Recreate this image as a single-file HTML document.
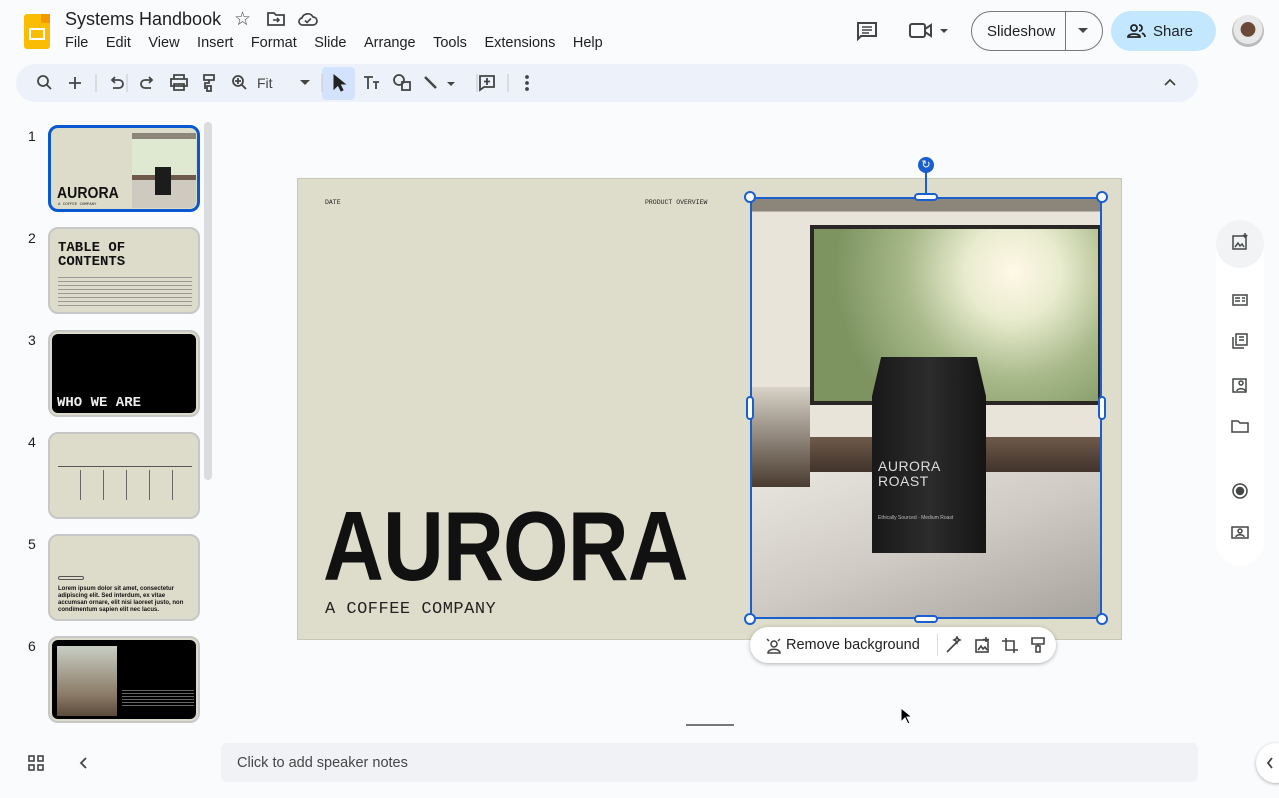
<!DOCTYPE html>
<html><head><meta charset="utf-8"><style>
*{box-sizing:border-box;margin:0;padding:0}
body{width:1279px;height:798px;overflow:hidden;background:#f9fbfd;font-family:"Liberation Sans",Arial,sans-serif;position:relative;color:#1f1f1f}
.a{position:absolute}
.menu span{margin-right:17.5px}
.thumb{position:absolute;left:48px;width:152px;height:87px;border:2px solid #c7c7c7;border-radius:10px;overflow:hidden;background:#dddcca;padding:2px}
.thumb .in{width:100%;height:100%;border-radius:6px;overflow:hidden;position:relative;background:#dddcca}
.num{position:absolute;left:28px;font-size:14px;color:#1f1f1f}
.mono{font-family:"Liberation Mono","DejaVu Sans Mono",monospace}
</style></head><body>
<div class="a" style="left:24px;top:14px;width:26px;height:35px;background:#fbbc04;border-radius:3px"></div>
<div class="a" style="left:41px;top:14px;width:9px;height:9px;background:#f29900;border-bottom-left-radius:2px"></div>
<div class="a" style="left:29px;top:28px;width:16px;height:12px;border:2px solid #fff"></div>
<div class="a" style="left:65px;top:9px;font-size:18px">Systems Handbook</div>
<div class="a" style="left:234px;top:8px;font-size:19px;color:#444">☆</div>
<svg class="a" style="left:266px;top:11px" width="20" height="16" viewBox="0 0 20 16"><path d="M2 2h6l2 2h8v10H2z" fill="none" stroke="#444" stroke-width="1.8"/><path d="M7 9h6M11 7l2 2-2 2" fill="none" stroke="#444" stroke-width="1.6"/></svg>
<svg class="a" style="left:298px;top:11px" width="20" height="16" viewBox="0 0 20 16"><path d="M5 14h10a4 4 0 0 0 0-8 6 6 0 0 0-11 1A3.5 3.5 0 0 0 5 14z" fill="none" stroke="#444" stroke-width="1.7"/><path d="M7 9.5l2 2 4-4" fill="none" stroke="#444" stroke-width="1.6"/></svg>
<div class="a menu" style="left:65px;top:35px;font-size:14.5px;white-space:nowrap"><span>File</span><span>Edit</span><span>View</span><span>Insert</span><span>Format</span><span>Slide</span><span>Arrange</span><span>Tools</span><span>Extensions</span><span>Help</span></div>
<svg class="a" style="left:856px;top:21px" width="22" height="20" viewBox="0 0 22 20"><path d="M2 2h18v13H5l-3 3z" fill="none" stroke="#444" stroke-width="2"/><path d="M6 6h10M6 9h10M6 12h7" stroke="#444" stroke-width="1.6"/></svg>
<svg class="a" style="left:909px;top:22px" width="40" height="18" viewBox="0 0 40 18"><rect x="1" y="2" width="15" height="13" rx="2" fill="none" stroke="#444" stroke-width="2"/><path d="M16 7l6-4v11l-6-4z" fill="none" stroke="#444" stroke-width="2"/><path d="M31 7h8l-4 4z" fill="#444"/></svg>
<div class="a" style="left:971px;top:11px;width:132px;height:40px;border:1px solid #747775;border-radius:20px"></div>
<div class="a" style="left:1065px;top:11px;width:1px;height:40px;background:#747775"></div>
<div class="a" style="left:987px;top:23px;font-size:15px;color:#1f1f1f">Slideshow</div>
<svg class="a" style="left:1078px;top:28px" width="10" height="6"><path d="M0 0h10L5 5z" fill="#444"/></svg>
<div class="a" style="left:1111px;top:11px;width:105px;height:40px;background:#c2e7ff;border-radius:20px"></div>
<svg class="a" style="left:1127px;top:23px" width="20" height="16" viewBox="0 0 20 16"><circle cx="7" cy="5" r="3" fill="none" stroke="#222" stroke-width="1.8"/><path d="M1 14c0-4 12-4 12 0z" fill="none" stroke="#222" stroke-width="1.8"/><path d="M12 2a3 3 0 0 1 0 6M15 10c2 1 3 2 3 4" fill="none" stroke="#222" stroke-width="1.8"/></svg>
<div class="a" style="left:1153px;top:23px;font-size:15px;color:#1f1f1f">Share</div>
<div class="a" style="left:1232px;top:15px;width:32px;height:32px;border-radius:50%;background:radial-gradient(circle at 50% 45%,#6b4a3a 0 30%,#e8e8e8 32% 60%,#bbb 62%)"></div>
<div class="a" style="left:16px;top:64px;width:1182px;height:38px;background:#edf2fa;border-radius:19px"></div>
<div class="a" style="left:322px;top:67px;width:33px;height:33px;background:#d3e3fd;border-radius:4px"></div>
<svg class="a" style="left:30px;top:70px" width="520" height="26" viewBox="0 0 520 26" fill="none" stroke="#444" stroke-width="1.8">
<circle cx="13" cy="11" r="5"/><path d="M17 15l4 4"/>
<path d="M45 7v12M39 13h12"/>
<path d="M66 4v18M97 4v18" stroke="#c7c7c7" stroke-width="1"/>
<path d="M82 10h7a4 4 0 0 1 0 8h-6M85 7l-3 3 3 3"/>
<path d="M122 10h-7a4 4 0 0 0 0 8h6M119 7l3 3-3 3"/>
<path d="M144 9V5h10v4M141 9h16v7h-16zM144 14h10v6h-10z"/>
<path d="M174 5h10v5h-10zM179 10v3h-4v6"/><rect x="177" y="16" width="4" height="5"/>
<circle cx="208" cy="11" r="5"/><path d="M212 15l4 4M208 8v6M205 11h6"/>
<path d="M292 4v18" stroke="#c7c7c7" stroke-width="1"/>
<path d="M304 5l0 14 4-4 3 6 2-1-3-6h5z" fill="#222" stroke="#222" stroke-width="1"/>
<path d="M334 7h9M338 7v12M343 12h6M346 12v7"/>
<circle cx="369" cy="10" r="5"/><rect x="372" y="12" width="8" height="8"/>
<path d="M395 7l11 11" stroke-width="2.5"/><path d="M417 12h8l-4 4z" fill="#444" stroke="none"/>
<path d="M447 4v18" stroke="#c7c7c7" stroke-width="1"/>
<path d="M450 6h14v11h-10l-4 3zM457 8v7M454 11.5h6"/>
<path d="M478 4v18" stroke="#c7c7c7" stroke-width="1"/>
<circle cx="497" cy="7" r="1" fill="#444"/><circle cx="497" cy="13" r="1" fill="#444"/><circle cx="497" cy="19" r="1" fill="#444"/>
</svg>
<div class="a" style="left:257px;top:75px;font-size:14px;color:#444">Fit</div>
<svg class="a" style="left:300px;top:80px" width="10" height="6"><path d="M0 0h10L5 5z" fill="#444"/></svg>
<svg class="a" style="left:1164px;top:78px" width="12" height="8"><path d="M1 7l5-5 5 5" fill="none" stroke="#444" stroke-width="1.8"/></svg>
<div class="a" style="left:204px;top:122px;width:8px;height:358px;background:#dadce0;border-radius:4px"></div>
<div class="num" style="top:128px">1</div><div class="num" style="top:230px">2</div><div class="num" style="top:332px">3</div><div class="num" style="top:434px">4</div><div class="num" style="top:536px">5</div><div class="num" style="top:638px">6</div>
<div class="thumb" style="top:125px;border:3px solid #0b57d0;padding:1px"><div class="in">
<div class="a" style="left:80px;top:4px;width:66px;height:76px;background:linear-gradient(#8c8579 0 8%,#dfe8d0 8% 55%,#6e5a4a 55% 62%,#cfcac0 62%)"></div>
<div class="a" style="left:103px;top:38px;width:16px;height:28px;background:#1c1c1c"></div>
<div class="a" style="left:5px;top:56px;font-size:16px;font-weight:bold;color:#111;transform:scaleX(.88);transform-origin:left">AURORA</div>
<div class="a mono" style="left:6px;top:74px;font-size:4px">A COFFEE COMPANY</div></div></div>
<div class="thumb" style="top:227px"><div class="in">
<div class="a mono" style="left:6px;top:10px;font-size:14px;font-weight:bold;line-height:14px;color:#111">TABLE OF<br>CONTENTS</div>
<div class="a" style="left:6px;top:43px;width:134px;height:34px;background:repeating-linear-gradient(#dddcca 0 3px,#999 3px 4px)"></div></div></div>
<div class="thumb" style="top:330px"><div class="in" style="background:#000">
<div class="a mono" style="left:5px;top:61px;font-size:14px;font-weight:bold;color:#eee">WHO WE ARE</div></div></div>
<div class="thumb" style="top:432px"><div class="in">
<div class="a" style="left:6px;top:30px;width:134px;height:1px;background:#555"></div>
<div class="a" style="left:6px;top:34px;width:134px;height:30px;background:repeating-linear-gradient(90deg,transparent 0 22px,#666 22px 23px)"></div></div></div>
<div class="thumb" style="top:534px"><div class="in">
<div class="a" style="left:6px;top:38px;width:26px;height:4px;border:1px solid #555;border-radius:2px"></div>
<div class="a" style="left:6px;top:48px;font-size:6px;line-height:7px;font-weight:bold;color:#111">Lorem ipsum dolor sit amet, consectetur adipiscing elit. Sed interdum, ex vitae accumsan ornare, elit nisi laoreet justo, non condimentum sapien elit nec lacus.</div></div></div>
<div class="thumb" style="top:636px"><div class="in" style="background:#000">
<div class="a" style="left:5px;top:6px;width:60px;height:70px;background:linear-gradient(#c9cfc4,#8a7a66 70%,#5c4a3a)"></div>
<div class="a" style="left:70px;top:48px;width:72px;height:20px;background:repeating-linear-gradient(#000 0 2px,#666 2px 3px)"></div></div></div>
<svg class="a" style="left:28px;top:755px" width="16" height="16" fill="none" stroke="#444" stroke-width="1.6"><rect x="1" y="1" width="5" height="5"/><rect x="10" y="1" width="5" height="5"/><rect x="1" y="10" width="5" height="5"/><rect x="10" y="10" width="5" height="5"/></svg>
<svg class="a" style="left:79px;top:757px" width="8" height="12"><path d="M7 1L2 6l5 5" fill="none" stroke="#444" stroke-width="1.8"/></svg>
<div class="a" style="left:297px;top:178px;width:825px;height:462px;background:#deddcb;border:1px solid #c9c8b8"></div>
<div class="a mono" style="left:325px;top:199px;font-size:6.5px;color:#222">DATE</div>
<div class="a mono" style="left:645px;top:199px;font-size:6.5px;color:#222">PRODUCT OVERVIEW</div>
<div class="a" style="left:323px;top:490px;font-size:98px;font-weight:bold;color:#111;letter-spacing:-1px;transform:scaleX(0.86);transform-origin:left">AURORA</div>
<div class="a mono" style="left:325px;top:600px;font-size:17px;color:#222;letter-spacing:0.5px">A COFFEE COMPANY</div>
<div class="a" style="left:750px;top:197px;width:352px;height:422px;overflow:hidden;background:#e6e2d8">
<div class="a" style="left:0;top:0;width:352px;height:240px;background:linear-gradient(#8c8579 0 6%,#e8e4da 6%)"></div>
<div class="a" style="left:60px;top:28px;width:292px;height:180px;background:radial-gradient(circle at 70% 25%,#fff8e6 0,#e9eccf 20%,#a8b98a 45%,#7d9461 75%);border:4px solid #2a2623"></div>
<div class="a" style="left:0;top:240px;width:352px;height:40px;background:linear-gradient(#6e5a4a,#3a2e26)"></div>
<div class="a" style="left:0;top:275px;width:352px;height:147px;background:linear-gradient(160deg,#e9e6e0,#cfcbc4 50%,#a7a39d)"></div>
<div class="a" style="left:0;top:190px;width:60px;height:100px;background:linear-gradient(#d8d3c8,#4a3b30)"></div>
<div class="a" style="left:122px;top:160px;width:114px;height:196px;background:linear-gradient(90deg,#181818,#2c2c2c 50%,#151515);clip-path:polygon(8% 0,92% 0,100% 20%,100% 100%,0 100%,0 20%)"></div>
<div class="a" style="left:128px;top:262px;font-size:14px;color:#ddd;line-height:15px;letter-spacing:0.5px">AURORA<br>ROAST</div>
<div class="a" style="left:128px;top:318px;font-size:5px;color:#bbb">Ethically Sourced · Medium Roast</div>
</div>
<div class="a" style="left:750px;top:197px;width:352px;height:422px;border:2px solid #1a5fd0"></div>
<div class="a" style="left:925px;top:170px;width:2px;height:27px;background:#1a5fd0"></div>
<div class="a" style="left:918px;top:157px;width:16px;height:16px;border-radius:50%;background:#1a5fd0;color:#fff;font-size:11px;line-height:16px;text-align:center">↻</div>
<div class="a" style="left:744px;top:191px;width:12px;height:12px;border-radius:50%;border:2px solid #1a5fd0;background:#fff"></div>
<div class="a" style="left:1096px;top:191px;width:12px;height:12px;border-radius:50%;border:2px solid #1a5fd0;background:#fff"></div>
<div class="a" style="left:744px;top:613px;width:12px;height:12px;border-radius:50%;border:2px solid #1a5fd0;background:#fff"></div>
<div class="a" style="left:1096px;top:613px;width:12px;height:12px;border-radius:50%;border:2px solid #1a5fd0;background:#fff"></div>
<div class="a" style="left:914px;top:193px;width:24px;height:8px;border-radius:4px;border:2px solid #1a5fd0;background:#fff"></div>
<div class="a" style="left:914px;top:615px;width:24px;height:8px;border-radius:4px;border:2px solid #1a5fd0;background:#fff"></div>
<div class="a" style="left:746px;top:396px;width:8px;height:24px;border-radius:4px;border:2px solid #1a5fd0;background:#fff"></div>
<div class="a" style="left:1098px;top:396px;width:8px;height:24px;border-radius:4px;border:2px solid #1a5fd0;background:#fff"></div>
<div class="a" style="left:750px;top:627px;width:306px;height:36px;background:#fff;border-radius:18px;box-shadow:0 1px 4px rgba(0,0,0,.3)"></div>
<svg class="a" style="left:765px;top:637px" width="18" height="17" fill="none" stroke="#444" stroke-width="1.5"><circle cx="9" cy="7" r="3"/><path d="M3 16c0-5 12-5 12 0z"/><path d="M2 2l2 2M15 2l-2 2"/></svg>
<div class="a" style="left:786px;top:637px;font-size:14.5px;color:#1f1f1f">Remove background</div>
<div class="a" style="left:937px;top:634px;width:1px;height:22px;background:#dadce0"></div>
<svg class="a" style="left:944px;top:636px" width="104" height="18" fill="none" stroke="#444" stroke-width="1.6">
<path d="M3 16L13 6M12 3l1-2 1 2 2 1-2 1-1 2-1-2-2-1z"/>
<rect x="32" y="4" width="12" height="12"/><path d="M34 14l3-4 2 3 2-2 2 3M42 1v5M39 3.5h6"/>
<path d="M62 2v12h12M58 5h12v12"/>
<path d="M88 2h12v6h-12zM94 8v2h-2v6h4v-6h-2"/>
</svg>
<svg class="a" style="left:900px;top:707px" width="12" height="18"><path d="M1 1v14l4-4 3 6 2-1-3-6h5z" fill="#000" stroke="#fff" stroke-width="1"/></svg>
<div class="a" style="left:686px;top:724px;width:48px;height:2px;background:#777"></div>
<div class="a" style="left:221px;top:743px;width:977px;height:39px;background:#f0f2f5;border-radius:6px"></div>
<div class="a" style="left:237px;top:755px;font-size:14.5px;color:#444746">Click to add speaker notes</div>
<div class="a" style="left:1216px;top:220px;width:48px;height:346px;background:#fff;border-radius:24px"></div>
<div class="a" style="left:1216px;top:220px;width:48px;height:48px;background:#f1f3f4;border-radius:24px"></div>
<svg class="a" style="left:1231px;top:233px" width="18" height="320" fill="none" stroke="#444746" stroke-width="1.5">
<rect x="2" y="3" width="13" height="13"/><path d="M4 14l3-4 2 3 2-2 2 3M14 0v5M11.5 2.5h5" />
<rect x="2" y="62" width="14" height="10"/><path d="M4 65h5M4 68h5M11 65h3M11 68h3"/>
<rect x="5" y="101" width="11" height="11"/><path d="M2 104v11h11M8 104h5M8 107h5"/>
<rect x="2" y="146" width="13" height="13"/><circle cx="10" cy="150" r="2"/><path d="M6 158c0-3 8-3 8 0"/>
<path d="M1 188h6l2 2h8v9H1z"/>
<circle cx="9" cy="258" r="7"/><circle cx="9" cy="258" r="3.5" fill="#444746"/>
<rect x="1" y="294" width="16" height="11"/><circle cx="9" cy="298" r="2"/><path d="M5 304c0-3 8-3 8 0"/>
</svg>
<div class="a" style="left:1256px;top:743px;width:40px;height:40px;border-radius:20px;background:#fff;box-shadow:0 1px 3px rgba(0,0,0,.3)"></div>
<svg class="a" style="left:1266px;top:757px" width="8" height="12"><path d="M6 1L2 6l4 5" fill="none" stroke="#444" stroke-width="1.8"/></svg>
</body></html>
